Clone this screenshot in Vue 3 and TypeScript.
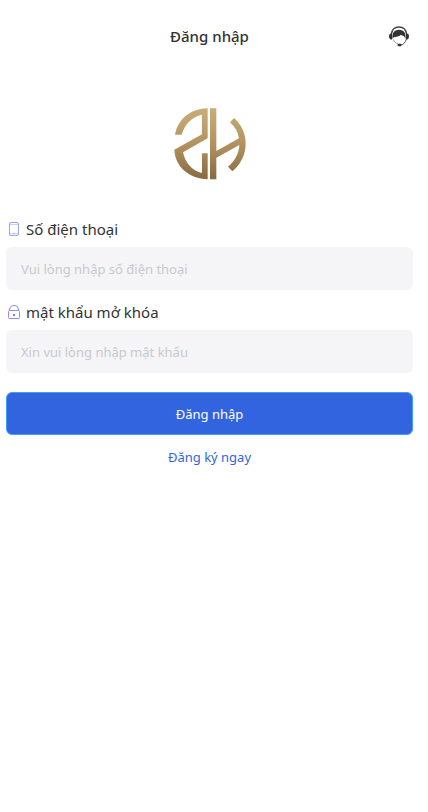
<script setup lang="ts">
import { ref } from 'vue'

const phone = ref('')
const password = ref('')
</script>

<template>
  <div class="page">
    <header class="bar">
      <h1 class="title">Đăng nhập</h1>
      <button class="support" type="button" aria-label="Hỗ trợ">
        <svg viewBox="0 0 20 21" width="20" height="21" fill="none">
          <path d="M2.500 8C3 3.500 5.800 1 10 1s7 2.500 7.500 7" stroke="#444" stroke-width="1.300" />
          <path d="M3.600 13C2.700 7.500 5 3.800 10 3.800s7.300 3.700 6.400 9.200c-.4-1.300-.9-2.300-1.800-3-1.100-.2-2-.6-2.600-1.200-1.500 1.500-3.600 2.100-6.200 2.100-1.200.2-1.900.9-2.200 2.100z" fill="#333" />
          <path d="M3 7.300v6.200C1 13.500 0 12.300 0 10.400S1 7.300 3 7.300zM17 7.300v6.200c2 0 3-1.200 3-3.100s-1-3.100-3-3.100z" fill="#333" />
          <path d="M4.400 13.500c.9 2.400 2.400 3.800 4.600 4.300" stroke="#888" stroke-width=".8" />
          <path d="M17.300 13c-.7 3.500-2.700 5.600-6 6.200" stroke="#555" stroke-width="1" />
          <rect x="8.500" y="17.800" width="4" height="2.400" rx="1.200" fill="#333" />
        </svg>
      </button>
    </header>

    <main class="content">
      <svg class="logo" viewBox="42 38 216 216" width="72" height="72" role="img" aria-label="ZH">
        <defs>
          <linearGradient id="gold" x1="0" y1="38" x2="0" y2="254" gradientUnits="userSpaceOnUse">
            <stop offset="0" stop-color="#c9ad78" />
            <stop offset="0.5" stop-color="#b2935f" />
            <stop offset="1" stop-color="#876943" />
          </linearGradient>
        </defs>
        <g fill="url(#gold)">
          <path d="M45 118C55 70 92 40 143 39V129L69 171C76 205 98 227 126 233V174H143V252C86 249 45 213 43 163L126 117V58C96 64 74 86 65 118Z" />
          <path d="M150 39H169V167L237 129C234 111 225 94 210 81L222 68C245 88 257 115 257 145C257 178 242 207 217 228L204 214C225 197 237 173 238 149L169 187V252H150Z" />
        </g>
      </svg>

      <form class="form" @submit.prevent>
        <label class="label" for="phone">
          <svg viewBox="0 0 16 16" width="16" height="16" fill="none">
            <rect x="3.500" y="1.500" width="9" height="13" rx="1.500" stroke="#9aa4f2" />
            <path d="M4 3.500h8M4 12.500h8" stroke="#b9dcfa" />
            <path d="M7 12.500h2" stroke="#c9a0ee" />
          </svg>
          <span>Số điện thoại</span>
        </label>
        <input id="phone" v-model="phone" class="field" type="tel" placeholder="Vui lòng nhập số điện thoại" />

        <label class="label" for="password">
          <svg viewBox="0 0 16 16" width="16" height="16" fill="none">
            <path d="M3.500 7V6a4.500 4.500 0 0 1 9 0v1" stroke="#8298f0" stroke-width="1.200" />
            <rect x="2.500" y="6.500" width="11" height="8" rx="1" stroke="#b082e8" />
            <path d="M3 6.500h10M3 14.500h10" stroke="#8298f0" />
            <rect x="7" y="10" width="2" height="2" fill="#7d83e8" />
          </svg>
          <span>mật khẩu mở khóa</span>
        </label>
        <input id="password" v-model="password" class="field" type="password" placeholder="Xin vui lòng nhập mật khẩu" />

        <button class="submit" type="submit">Đăng nhập</button>
        <a class="register" href="#">Đăng ký ngay</a>
      </form>
    </main>
  </div>
</template>

<style>
body {
  background: #fff;
}
</style>

<style scoped>
.page {
  padding: 12px 15px 0 6px;
  color: #323233;
  font-family: "Noto Sans", "Open Sans", sans-serif;
}

.bar {
  display: grid;
  grid-template-columns: 1fr auto 1fr;
  align-items: center;
  height: 48px;
}

.title {
  grid-column: 2;
  margin: 0;
  font-size: 15px;
  font-weight: 500;
  line-height: 20px;
}

.support {
  justify-self: end;
  display: flex;
  margin-right: 4px;
  padding: 0;
  border: 0;
  background: none;
  cursor: pointer;
}

.content,
.form {
  display: flex;
  flex-direction: column;
}

.logo {
  align-self: center;
  margin: 48px 0 37px;
}

.label {
  display: flex;
  align-items: center;
  gap: 4px;
  height: 24px;
  font-size: 15px;
  line-height: 24px;
}

.field {
  box-sizing: border-box;
  width: 100%;
  height: 43px;
  margin: 6px 0 10px;
  padding: 0 15px;
  border: 0;
  border-radius: 6px;
  background: #f5f5f8;
  color: #323233;
  font: inherit;
  font-size: 13px;
}

.field::placeholder {
  color: #c8c9cc;
  opacity: 1;
}

.submit {
  height: 43px;
  margin-top: 9px;
  border: 1px solid #409eff;
  border-radius: 6px;
  background: #3264e0;
  color: #fff;
  font: inherit;
  font-size: 13px;
  cursor: pointer;
}

.register {
  align-self: center;
  margin-top: 12px;
  color: #3264e0;
  font-size: 13px;
  line-height: 20px;
  text-decoration: none;
}
</style>
